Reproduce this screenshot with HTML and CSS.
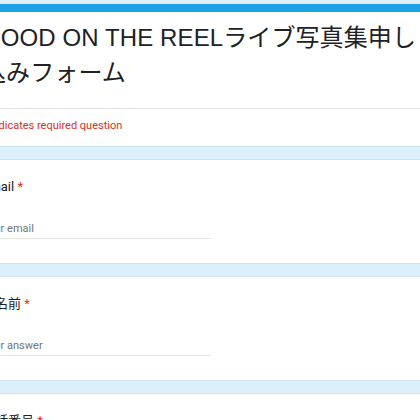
FILE: index.html
```html
<!DOCTYPE html>
<html lang="ja">
<head>
<meta charset="utf-8">
<title>GOOD ON THE REELライブ写真集申し込みフォーム</title>
<link rel="stylesheet" href="styles.css">
</head>
<body>
<div class="wrap">
  <div class="card title-card">
    <div class="title-section">
      <h1 class="form-title">GOOD ON THE REELライブ写真集申し込みフォーム</h1>
    </div>
    <div class="divider"></div>
    <div class="required-note">* Indicates required question</div>
  </div>

  <div class="card question">
    <div class="q-title">Email <span class="req">*</span></div>
    <div class="q-input">Your email</div>
  </div>

  <div class="card question">
    <div class="q-title">お名前 <span class="req">*</span></div>
    <div class="q-input">Your answer</div>
  </div>

  <div class="card question">
    <div class="q-title">電話番号 <span class="req">*</span></div>
    <div class="q-input">Your answer</div>
  </div>
</div>
</body>
</html>
```

FILE: styles.css
```css
html, body {
  margin: 0;
  padding: 0;
}

body {
  background: #dcf0fb;
  font-family: Roboto, "Noto Sans CJK JP", sans-serif;
  color: #202124;
}

.wrap {
  margin-left: -43px;
  width: 490px;
  padding-top: 4px;
  display: flex;
  flex-direction: column;
  gap: 12px;
}

.card {
  background: #ffffff;
  border: 1px solid #cfe3ee;
  border-radius: 8px;
}

.title-card {
  border-top: 8px solid #1ca1e6;
  border-radius: 0 0 8px 8px;
}

.title-section {
  padding: 8px 24px 18px;
}

.form-title {
  margin: 0;
  font-family: "Liberation Sans", Arial, "Noto Sans CJK JP", sans-serif;
  font-weight: 400;
  font-size: 24px;
  letter-spacing: 0.1px;
  line-height: 35px;
  color: #202124;
}

.divider {
  border-top: 1px solid #e3e3e3;
}

.required-note {
  padding: 9px 24px 12px;
  font-size: 11px;
  line-height: 16px;
  color: #d93025;
}

.question {
  padding: 18px 24px 24px;
}

.q-title {
  font-size: 13px;
  line-height: 18px;
  color: #202124;
}

.req {
  color: #d93025;
}

.q-input {
  margin-top: 25px;
  width: 229px;
  font-size: 11px;
  line-height: 16px;
  padding-bottom: 1px;
  color: #70757a;
  border-bottom: 1px solid #e6e6e6;
}
```
